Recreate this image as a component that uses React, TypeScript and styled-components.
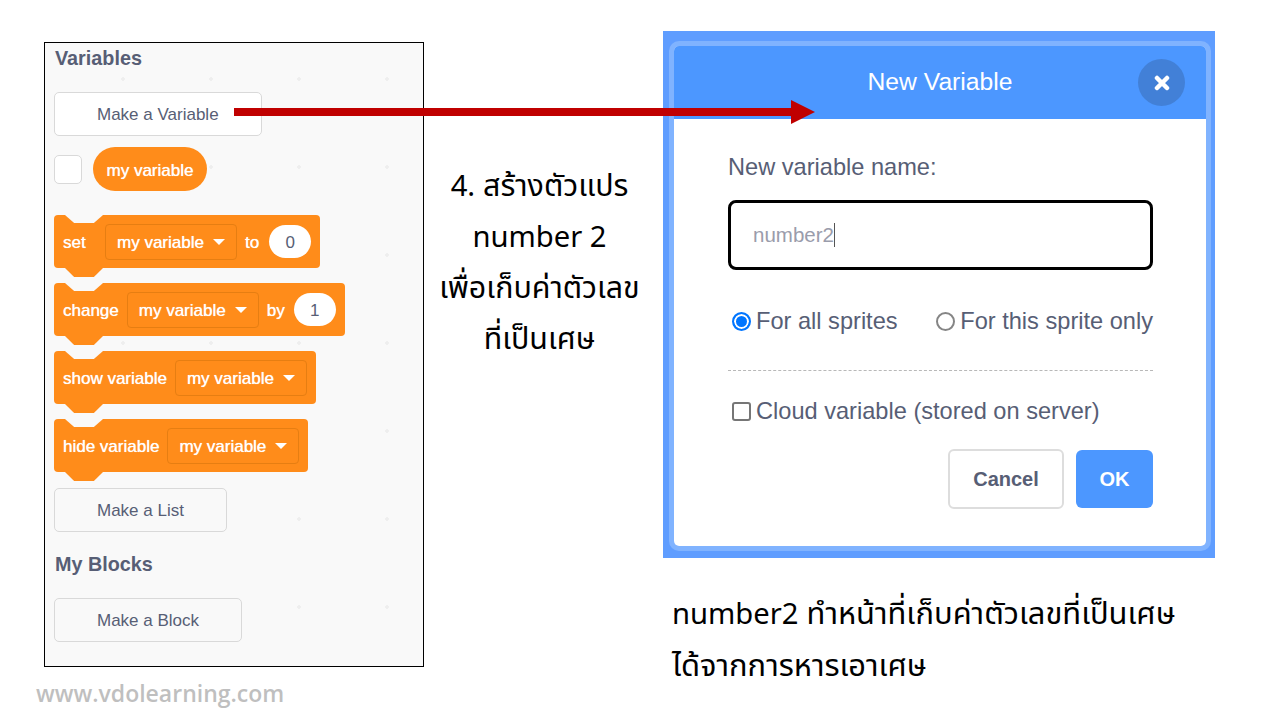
import * as React from 'react';
import styled, {createGlobalStyle} from 'styled-components';

const orange = '#ff8c1a';
const slate = '#575e75';
const blue = '#4c97ff';
const thaiStack = `"Noto Sans Thai", "Noto Sans Thai Looped", Lato, "Noto Sans", "DejaVu Sans", sans-serif`;

const GlobalStyle = createGlobalStyle`
  html, body {
    margin: 0;
    padding: 0;
    background: #fff;
  }
  * {
    box-sizing: border-box;
  }
`;

const Page = styled.div`
  position: relative;
  display: flex;
  width: 1280px;
  height: 720px;
  overflow: hidden;
  background: #fff;
  font-family: "Liberation Sans", Arial, sans-serif;
`;

const LeftColumn = styled.div`
  width: 380px;
  margin-left: 44px;
  padding-top: 42px;
`;

const Palette = styled.div`
  display: flex;
  flex-direction: column;
  align-items: flex-start;
  height: 625px;
  padding: 3px 0 0 9px;
  border: 1px solid #000;
  background-color: #f9f9f9;
  background-image: radial-gradient(circle, #eeeeee 1.5px, transparent 2px);
  background-size: 88px 88px;
  background-position: 34px -8px;
`;

const Heading = styled.div<{$top?: number}>`
  margin-top: ${props => props.$top || 0}px;
  margin-left: 1px;
  height: 24px;
  line-height: 24px;
  font-size: 19.8px;
  font-weight: bold;
  color: ${slate};
`;

const PaletteButton = styled.div<{$width: number; $white?: boolean; $top: number}>`
  width: ${props => props.$width}px;
  height: 44px;
  margin-top: ${props => props.$top}px;
  padding-left: 42px;
  line-height: 44px;
  font-size: 17px;
  color: ${slate};
  background: ${props => (props.$white ? '#fff' : '#f9f9f9')};
  border: 1px solid #d9d9d9;
  border-radius: 5px;
`;

const VariableRow = styled.div`
  display: flex;
  align-items: center;
  gap: 11px;
  margin-top: 11px;
  margin-bottom: 24px;
`;

const MonitorCheck = styled.div`
  width: 28px;
  height: 29px;
  background: #fff;
  border: 1px solid #d9d9d9;
  border-radius: 5px;
`;

const ReporterPill = styled.div`
  width: 114px;
  height: 44px;
  line-height: 47px;
  text-align: center;
  font-size: 17px;
  color: #fff;
  text-shadow: 0 0 0.7px #fff;
  background: ${orange};
  border-radius: 22px;
`;

const Block = styled.div`
  position: relative;
  display: flex;
  align-items: center;
  height: 53px;
  margin-bottom: 15px;
  padding: 0 9px;
  line-height: 22px;
  font-size: 17px;
  color: #fff;
  text-shadow: 0 0 0.7px #fff;
  background: ${orange};
  border-radius: 4px;

  &::before,
  &::after {
    content: '';
    position: absolute;
    left: 11px;
    width: 38px;
    clip-path: polygon(0 0, 100% 0, 76% 100%, 24% 100%);
  }
  &::before {
    top: 0;
    height: 8px;
    background: #f9f9f9;
  }
  &::after {
    top: 100%;
    height: 9px;
    background: ${orange};
  }
`;

const BlockLabel = styled.span<{$width?: number; $gap: number}>`
  min-width: ${props => props.$width || 0}px;
  margin-top: 2px;
  margin-right: ${props => props.$gap}px;
  white-space: nowrap;
`;

const Dropdown = styled.div<{$gap?: number}>`
  display: flex;
  align-items: center;
  gap: 9px;
  width: 132px;
  height: 36px;
  margin-right: ${props => props.$gap || 0}px;
  padding: 2px 0 0 11px;
  white-space: nowrap;
  border: 1px solid #e67e12;
  border-radius: 4px;
`;

const Caret = styled.span`
  width: 0;
  height: 0;
  margin-top: -2px;
  border-left: 6px solid transparent;
  border-right: 6px solid transparent;
  border-top: 6px solid #fff;
`;

const Oval = styled.div`
  width: 42px;
  height: 33px;
  line-height: 35px;
  text-align: center;
  color: ${slate};
  text-shadow: none;
  background: #fff;
  border-radius: 17px;
`;

const Watermark = styled.div`
  margin: 10px 0 0 -8px;
  line-height: 32px;
  font-family: "Open Sans", sans-serif;
  font-size: 23px;
  font-weight: 600;
  white-space: nowrap;
  color: #bfbfbf;
`;

const Caption = styled.div`
  width: 239px;
  padding: 162px 8px 0 0;
  text-align: center;
  font-family: ${thaiStack};
  font-size: 30.4px;
  line-height: 51px;
  white-space: nowrap;
  color: #000;
`;

const LatinRun = styled.span`
  font-size: 29.2px;
`;

const RightColumn = styled.div`
  width: 552px;
  padding-top: 31px;
`;

const ModalFrame = styled.div`
  height: 527px;
  padding: 10px 4px 7px 6px;
  background: #5f9dff;
`;

const ModalRing = styled.div`
  height: 100%;
  border: 5px solid #80b3ff;
  border-radius: 10px;
`;

const Modal = styled.div`
  height: 100%;
  overflow: hidden;
  background: #fff;
  border-radius: 5px;
`;

const ModalHeader = styled.div`
  position: relative;
  height: 73px;
  line-height: 72px;
  text-align: center;
  font-size: 24.7px;
  color: #fff;
  background: ${blue};
`;

const CloseButton = styled.div`
  position: absolute;
  top: 13px;
  right: 21px;
  display: flex;
  align-items: center;
  justify-content: center;
  width: 47px;
  height: 47px;
  background: #4280d7;
  border-radius: 50%;
`;

const ModalBody = styled.div`
  display: flex;
  flex-direction: column;
  padding: 33px 53px 0 54px;
  font-size: 23.6px;
  color: ${slate};
`;

const FieldLabel = styled.div`
  height: 30px;
  line-height: 30px;
`;

const NameInput = styled.div`
  display: flex;
  align-items: center;
  height: 70px;
  margin-top: 18px;
  padding-left: 22px;
  font-size: 20.5px;
  color: #9a9cab;
  border: 3px solid #000;
  border-radius: 8px;
`;

const TextCaret = styled.span`
  width: 1px;
  height: 24px;
  background: #555;
`;

const RadioRow = styled.div`
  display: flex;
  justify-content: space-between;
  height: 30px;
  margin-top: 36px;
  padding-left: 4px;
`;

const Option = styled.div`
  display: flex;
  align-items: center;
  gap: 5px;
  line-height: 30px;
  white-space: nowrap;
`;

const RadioDot = styled.span<{$checked?: boolean}>`
  width: 19px;
  height: 19px;
  background: ${props => (props.$checked ? '#0075ff' : '#fff')};
  border: ${props => (props.$checked ? '2px solid #0075ff' : '2px solid #858585')};
  box-shadow: ${props => (props.$checked ? 'inset 0 0 0 2px #fff' : 'none')};
  border-radius: 50%;
`;

const CheckBox = styled.span`
  width: 19px;
  height: 19px;
  border: 2px solid #767676;
  border-radius: 3px;
`;

const DashedRule = styled.div`
  margin-top: 34px;
  border-top: 1px dashed #b8b8b8;
`;

const CloudRow = styled.div`
  height: 30px;
  margin-top: 25px;
  padding-left: 4px;
`;

const ButtonRow = styled.div`
  display: flex;
  justify-content: flex-end;
  align-items: center;
  gap: 12px;
  margin-top: 23px;
`;

const DialogButton = styled.div<{$primary?: boolean}>`
  width: ${props => (props.$primary ? 77 : 116)}px;
  height: ${props => (props.$primary ? 58 : 60)}px;
  line-height: ${props => (props.$primary ? 58 : 56)}px;
  text-align: center;
  font-size: 20px;
  font-weight: bold;
  color: ${props => (props.$primary ? '#fff' : slate)};
  background: ${props => (props.$primary ? blue : '#fff')};
  border: ${props => (props.$primary ? 'none' : '2px solid #dddddd')};
  border-radius: 6px;
`;

const Note = styled.div`
  margin: 31px 0 0 9px;
  font-family: ${thaiStack};
  font-size: 30.9px;
  line-height: 51px;
  white-space: nowrap;
  color: #000;
`;

const ArrowSvg = styled.svg`
  position: absolute;
  top: 100px;
  left: 234px;
`;

const BlockRow = (props: {label: string; width?: number; gap?: number; children?: React.ReactNode}) => (
  <Block>
    <BlockLabel $width={props.width} $gap={props.gap || 8}>
      {props.label}
    </BlockLabel>
    <Dropdown $gap={props.children ? 8 : 0}>
      my variable
      <Caret />
    </Dropdown>
    {props.children}
  </Block>
);

const App: React.FC = () => {
  return (
    <Page>
      <GlobalStyle />
      <LeftColumn>
        <Palette>
          <Heading>Variables</Heading>
          <PaletteButton $white $width={208} $top={22}>
            Make a Variable
          </PaletteButton>
          <VariableRow>
            <MonitorCheck />
            <ReporterPill>my variable</ReporterPill>
          </VariableRow>
          <BlockRow label="set" width={33} gap={9}>
            <BlockLabel $gap={10}>to</BlockLabel>
            <Oval>0</Oval>
          </BlockRow>
          <BlockRow label="change">
            <BlockLabel $gap={9}>by</BlockLabel>
            <Oval>1</Oval>
          </BlockRow>
          <BlockRow label="show variable" />
          <BlockRow label="hide variable" />
          <PaletteButton $width={173} $top={1}>
            Make a List
          </PaletteButton>
          <Heading $top={20}>My Blocks</Heading>
          <PaletteButton $width={188} $top={22}>
            Make a Block
          </PaletteButton>
        </Palette>
        <Watermark>www.vdolearning.com</Watermark>
      </LeftColumn>
      <Caption>
        <LatinRun>4.</LatinRun> สร้างตัวแปร
        <br />
        <LatinRun>number 2</LatinRun>
        <br />
        เพื่อเก็บค่าตัวเลข
        <br />
        ที่เป็นเศษ
      </Caption>
      <RightColumn>
        <ModalFrame>
          <ModalRing>
            <Modal>
              <ModalHeader>
                New Variable
                <CloseButton>
                  <svg width="16" height="16" viewBox="0 0 16 16">
                    <path d="M3 3 L13 13 M13 3 L3 13" stroke="#fff" strokeWidth="4.5" strokeLinecap="round" />
                  </svg>
                </CloseButton>
              </ModalHeader>
              <ModalBody>
                <FieldLabel>New variable name:</FieldLabel>
                <NameInput>
                  number2
                  <TextCaret />
                </NameInput>
                <RadioRow>
                  <Option>
                    <RadioDot $checked />
                    For all sprites
                  </Option>
                  <Option>
                    <RadioDot />
                    For this sprite only
                  </Option>
                </RadioRow>
                <DashedRule />
                <CloudRow>
                  <Option>
                    <CheckBox />
                    Cloud variable (stored on server)
                  </Option>
                </CloudRow>
                <ButtonRow>
                  <DialogButton>Cancel</DialogButton>
                  <DialogButton $primary>OK</DialogButton>
                </ButtonRow>
              </ModalBody>
            </Modal>
          </ModalRing>
        </ModalFrame>
        <Note>
          <LatinRun>number2</LatinRun> ทำหน้าที่เก็บค่าตัวเลขที่เป็นเศษ
          <br />
          ได้จากการหารเอาเศษ
        </Note>
      </RightColumn>
      <ArrowSvg width="582" height="24" viewBox="0 0 582 24">
        <rect x="0" y="8" width="558" height="8" fill="#c00000" />
        <polygon points="557,0 581,12 557,24" fill="#c00000" />
      </ArrowSvg>
    </Page>
  );
};

export default App;
